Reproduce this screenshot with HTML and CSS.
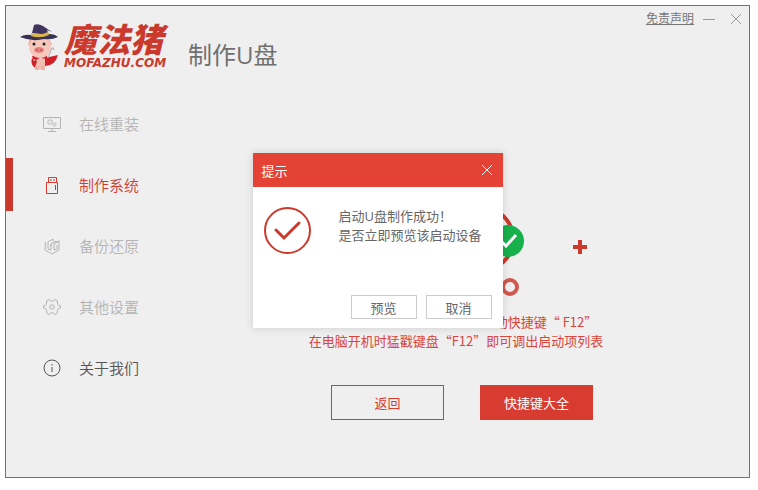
FILE: index.html
```html
<!DOCTYPE html>
<html lang="zh-CN">
<head>
  <meta charset="UTF-8">
  <meta name="viewport" content="width=device-width, initial-scale=1">
  <title>制作U盘</title>
  <link rel="stylesheet" href="styles.css">
</head>
<body>
  <div class="window">
    <header class="header">
      <div class="logo">
        <svg class="pig" width="42" height="48" viewBox="0 0 42 48">
          <path d="M13 34 Q20 38 27 34 L24 45 Q20 48 17 45Z" fill="#f3bdb0"/>
          <path d="M12 33 L27 32 L27 36 L20 35 L14 38Z M25 35 L38 32 Q35 43 25 43Z M12 35 Q10 41 15 45 L17 38Z" fill="#cf2028"/>
          <path d="M15 43h4v4h-4z M21 43h4v4h-4z" fill="#efb1a6"/>
          <path d="M10 15 L8 22 L13 21Z M29 15 L32 22 L27 22Z" fill="#eea79d"/>
          <ellipse cx="20" cy="24" rx="11" ry="11" fill="#f6c8bc"/>
          <ellipse cx="19" cy="27" rx="5" ry="3" fill="#e77e80"/>
          <path d="M17 26v2 M21 26v2" stroke="#a84a50" stroke-width="1"/>
          <circle cx="14" cy="21" r="1.500" fill="#222"/>
          <circle cx="24" cy="21" r="1.500" fill="#222"/>
          <path d="M12 10 L14 2 Q18 0 23 3 L32 9 L27 7 L29 12Z" fill="#40355f"/>
          <path d="M0 14 Q5 11 11 12 Q20 16 29 11 Q35 11 38 14 Q32 17 24 16 Q12 19 0 14Z" fill="#393252"/>
          <path d="M11 10 Q20 13 28 9 L29 12 Q20 16 11 13Z" fill="#d9b54b"/>
          <path d="M28 35 L32 25 Q34 24 34 27" fill="none" stroke="#aaa" stroke-width="1"/>
        </svg>
        <div class="brand">
          <strong>魔法猪</strong>
          <span>MOFAZHU.COM</span>
        </div>
      </div>
      <h1>制作U盘</h1>
      <div class="controls">
        <a href="#">免责声明</a>
        <button type="button" aria-label="最小化">
          <svg width="12" height="12" viewBox="0 0 12 12"><path d="M0 6.500h12"/></svg>
        </button>
        <button type="button" aria-label="关闭">
          <svg width="12" height="12" viewBox="0 0 12 12"><path d="M1 1l10 10M11 1L1 11"/></svg>
        </button>
      </div>
    </header>

    <div class="body">
      <nav class="menu">
        <a href="#" class="disabled">
          <svg width="18" height="18" viewBox="0 0 18 18"><path d="M.5 2.500h17v11H.5z M9 13.500v3 M5 16.500h8"/><circle cx="7" cy="7" r="2.200"/><circle cx="11.500" cy="9.500" r="1.500"/></svg>
          在线重装
        </a>
        <a href="#" class="active">
          <svg width="18" height="18" viewBox="0 0 18 18"><path d="M3.500 6.500h11v11h-11z M5.500 6.500v-5h8v5 M8 3v2 M11 3v2 M12.500 9v5"/></svg>
          制作系统
        </a>
        <a href="#" class="disabled">
          <svg width="18" height="18" viewBox="0 0 18 18"><path d="M2.500 5L2 13l7 4 7-4V4l-3 1 M5 12V5l5-3v2 M5 12l3 1V7l5-3v2 M8 7v2 M11 13V7l5-3 M11 13l3-1V8"/></svg>
          备份还原
        </a>
        <a href="#" class="disabled">
          <svg width="18" height="18" viewBox="0 0 18 18"><path d="M6 1.500Q9 5 12 1.500L14.500 3Q13.500 7.500 17.500 8v2Q13.500 10.500 14.500 15L12 16.500Q9 13 6 16.500L3.500 15Q4.500 10.500.5 10V8Q4.500 7.500 3.500 3z"/><circle cx="9" cy="9" r="2.200"/></svg>
          其他设置
        </a>
        <a href="#">
          <svg width="18" height="18" viewBox="0 0 18 18"><circle cx="9" cy="9" r="8"/><path d="M9 8v5 M9 5v1.500"/></svg>
          关于我们
        </a>
      </nav>

      <main class="content">
        <svg width="248" height="100" viewBox="0 0 248 100">
          <circle cx="143" cy="34" r="32" fill="none" stroke="#cb392c" stroke-width="4"/>
          <circle cx="170" cy="36" r="16" fill="#16b14b"/>
          <path d="M162 35l6 6 10-11" fill="none" stroke="#fff" stroke-width="3"/>
          <path d="M235 42h14M242 35v14" stroke="#cb392c" stroke-width="4"/>
          <circle cx="172" cy="82" r="7" fill="none" stroke="#d2574e" stroke-width="4"/>
        </svg>
        <div class="tips">
          <p class="key">动快捷键“ F12”</p>
          <p>在电脑开机时猛戳键盘“F12”即可调出启动项列表</p>
        </div>
        <div class="buttons">
          <button type="button" class="back">返回</button>
          <button type="button" class="keys">快捷键大全</button>
        </div>
      </main>
    </div>

    <div class="dialog" role="dialog" aria-labelledby="dialog-title">
      <div class="dialog-head">
        <h2 id="dialog-title">提示</h2>
        <button type="button" aria-label="关闭">
          <svg width="12" height="12" viewBox="0 0 12 12"><path d="M1 1l10 10M11 1L1 11"/></svg>
        </button>
      </div>
      <div class="dialog-body">
        <svg width="48" height="48" viewBox="0 0 48 48"><circle cx="23.500" cy="23.500" r="22.500" stroke-width="2"/><path d="M12 23l8 8 15-15" stroke-width="3" stroke-linecap="round"/></svg>
        <p>启动U盘制作成功！<br>是否立即预览该启动设备</p>
      </div>
      <div class="dialog-foot">
        <button type="button">预览</button>
        <button type="button">取消</button>
      </div>
    </div>
  </div>
</body>
</html>
```
FILE: styles.css
```css
* {
  box-sizing: border-box;
}
body {
  margin: 0;
  padding: 5px 8px 12px 5px;
  min-height: 100vh;
  display: flex;
  background: #fff;
  color: #666;
  font-family: "Open Sans", "Noto Sans CJK SC", sans-serif;
  font-size: 13px;
}
button {
  font: inherit;
  color: inherit;
  cursor: pointer;
}
svg {
  display: block;
  flex: none;
  overflow: visible;
}
h1, h2, p {
  margin: 0;
  font-weight: normal;
}
.window {
  position: relative;
  flex: 1;
  display: flex;
  flex-direction: column;
  border: 1px solid #d9453b;
  background: #efefef;
}

/* header */
.header {
  display: flex;
  align-items: flex-start;
  padding: 0 7px 0 14px;
  height: 91px;
}
.logo {
  display: flex;
  padding-top: 17px;
}
.brand {
  display: flex;
  flex-direction: column;
  color: #cb392c;
  font-style: italic;
  font-weight: 900;
  margin-left: 2px;
  width: 124px;
}
.brand strong {
  font-size: 33px;
  line-height: 34px;
  font-weight: 900;
}
.brand span {
  font-family: "DejaVu Sans", sans-serif;
  font-size: 12px;
  line-height: 12px;
}
.header h1 {
  color: #707070;
  font-size: 24px;
  line-height: 32px;
  padding-top: 33px;
}
.controls {
  display: flex;
  align-items: center;
  gap: 9px;
  margin-left: auto;
  padding-top: 3px;
  font-size: 12px;
  line-height: 20px;
}
.controls a {
  color: #777;
}
.controls button {
  border: none;
  background: none;
  padding: 0;
}
.controls button:last-child {
  margin-left: 6px;
}
.controls path {
  stroke: #999;
  fill: none;
}

/* left menu */
.body {
  flex: 1;
  display: flex;
}
.menu {
  width: 196px;
}
.menu a {
  display: flex;
  align-items: center;
  gap: 18px;
  height: 53px;
  margin-bottom: 8px;
  padding-left: 30px;
  border-left: 7px solid transparent;
  color: #555;
  font-size: 15px;
  font-weight: 350;
  text-decoration: none;
}
.menu svg {
  fill: none;
  stroke: currentColor;
}
.menu a.disabled {
  color: #b4b4b4;
}
.menu a.active {
  color: #d33a2f;
  border-color: #cb392c;
}

/* main part */
.content {
  flex: 1;
  display: flex;
  flex-direction: column;
  align-items: center;
  padding: 108px 27px 0 0;
}
.tips {
  margin: 7px 12px 0 0;
  color: #d9453b;
  font-family: "Noto Sans CJK SC", sans-serif;
  line-height: 19px;
  text-align: right;
}
.tips .key {
  padding-right: 6px;
}
.buttons {
  display: flex;
  gap: 36px;
  margin-top: 35px;
}
.buttons button {
  width: 113px;
  height: 35px;
  border: 1px solid #d83c31;
  background: none;
  color: #d83c31;
}
.buttons .keys {
  background: #d83c31;
  color: #fff;
}

/* dialog */
.dialog {
  position: absolute;
  top: 147px;
  left: 50%;
  width: 250px;
  margin-left: -125px;
  background: #fff;
  box-shadow: 0 0 8px rgba(0,0,0,0.15);
}
.dialog-head {
  display: flex;
  justify-content: space-between;
  align-items: center;
  height: 34px;
  padding: 0 10px 0 9px;
  background: #e34234;
  color: #fff;
}
.dialog-head h2 {
  font-size: 13px;
}
.dialog-head button {
  border: none;
  background: none;
  padding: 0;
}
.dialog-head path {
  stroke: #fff;
}
.dialog-body {
  display: flex;
  gap: 27px;
  padding: 20px 11px;
}
.dialog-body svg {
  fill: none;
  stroke: #cb392c;
}
.dialog-body p {
  line-height: 19px;
  white-space: nowrap;
}
.dialog-foot {
  display: flex;
  justify-content: flex-end;
  gap: 9px;
  padding: 20px 11px 9px;
}
.dialog-foot button {
  width: 66px;
  height: 24px;
  padding: 0;
  border: 1px solid #ccc;
  background: #fff;
}
```
